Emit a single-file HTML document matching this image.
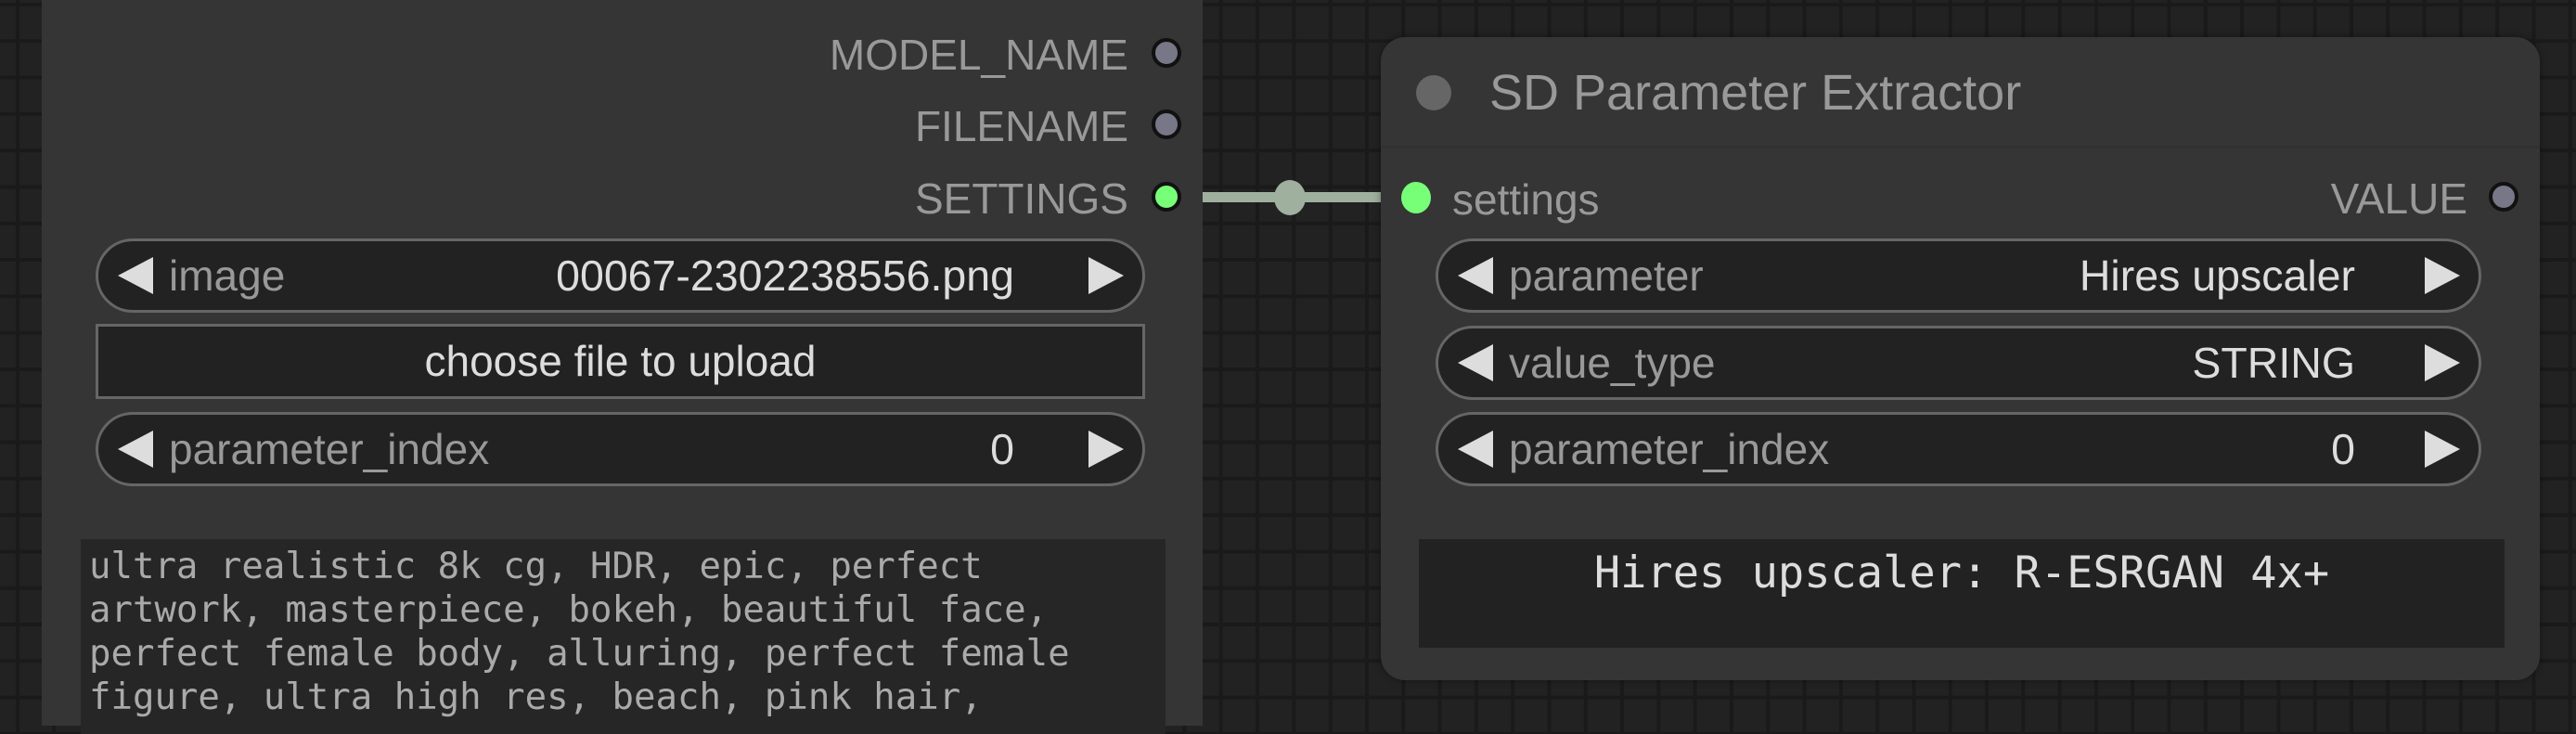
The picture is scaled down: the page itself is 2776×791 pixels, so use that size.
<!DOCTYPE html>
<html><head><style>
html,body{margin:0;padding:0}
body{width:2776px;height:782px;overflow:hidden;position:relative;background-color:#222;
background-image:linear-gradient(to right,#1a1a1a 0 4px,transparent 4px),linear-gradient(to bottom,#1a1a1a 0 4px,transparent 4px);
background-size:39.3px 39.3px;background-position:17px 3px;font-family:"Liberation Sans",sans-serif}
.abs{position:absolute}
.node{position:absolute;background:#353535}
.lbl{position:absolute;font-size:46px;color:#999;white-space:nowrap;line-height:50px}
.dot{position:absolute;width:32px;height:32px;border-radius:50%;border:4px solid #111;box-sizing:border-box}
.w{position:absolute;height:80px;border-radius:40px;background:#222;border:3px solid #666;box-sizing:border-box}
.w .l{position:absolute;border-style:solid;border-width:20px 38px 20px 0;border-color:transparent #ddd transparent transparent;top:17px}
.w .r{position:absolute;border-style:solid;border-width:20px 0 20px 38px;border-color:transparent transparent transparent #ddd;top:17px}
.w .t{position:absolute;top:12px;font-size:46px;line-height:50px;color:#999;white-space:nowrap}
.w .v{position:absolute;top:12px;font-size:46.5px;line-height:50px;color:#ddd;white-space:nowrap;text-align:right}
.mono{font-family:"DejaVu Sans Mono","Liberation Mono",monospace}
</style></head><body>
<div class="node" style="left:45px;top:0;width:1251px;height:782px"></div>
<div class="lbl" style="right:1560px;top:34px">MODEL_NAME</div>
<div class="dot" style="left:1241px;top:41px;background:#778"></div>
<div class="lbl" style="right:1560px;top:111px">FILENAME</div>
<div class="dot" style="left:1241px;top:118px;background:#778"></div>
<div class="lbl" style="right:1560px;top:189px">SETTINGS</div>
<div class="dot" style="left:1241px;top:196px;background:#7f7"></div>

<div class="w" style="left:103px;top:257px;width:1131px"><div class="l" style="left:21px"></div><div class="t" style="left:76px">image</div><div class="v" style="right:138px">00067-2302238556.png</div><div class="r" style="left:1067px"></div></div>
<div class="abs" style="left:103px;top:349px;width:1131px;height:81px;background:#222;border:3px solid #666;box-sizing:border-box;color:#ddd;font-size:46px;line-height:75px;text-align:center">choose file to upload</div>
<div class="w" style="left:103px;top:444px;width:1131px"><div class="l" style="left:21px"></div><div class="t" style="left:76px">parameter_index</div><div class="v" style="right:138px">0</div><div class="r" style="left:1067px"></div></div>

<div class="abs mono" style="left:87px;top:581px;width:1169px;height:210px;background:#262626;color:#aaa;font-size:39px;line-height:47px;padding:6px 0 0 9px;box-sizing:border-box;white-space:pre">ultra realistic 8k cg, HDR, epic, perfect
artwork, masterpiece, bokeh, beautiful face,
perfect female body, alluring, perfect female
figure, ultra high res, beach, pink hair,</div>

<div class="abs" style="left:1296px;top:207px;width:216px;height:11px;background:#9fb09f"></div>
<div class="abs" style="left:1373px;top:194px;width:34px;height:38px;border-radius:50%;background:#9fb09f"></div>

<div class="node" style="left:1488px;top:40px;width:1249px;height:693px;border-radius:26px;box-shadow:0 0 8px rgba(0,0,0,.4)"></div>
<div class="abs" style="left:1488px;top:157px;width:1249px;height:3px;background:#303030"></div>
<div class="abs" style="left:1526px;top:81px;width:38px;height:38px;border-radius:50%;background:#666"></div>
<div class="abs" style="left:1605px;top:68px;font-size:54px;line-height:64px;color:#999;white-space:nowrap">SD Parameter Extractor</div>
<div class="abs" style="left:1510px;top:196px;width:32px;height:34px;border-radius:50%;background:#7f7"></div>
<div class="lbl" style="left:1565px;top:190px">settings</div>
<div class="lbl" style="right:117px;top:189px">VALUE</div>
<div class="dot" style="left:2682px;top:196px;background:#778"></div>

<div class="w" style="left:1547px;top:257px;width:1127px"><div class="l" style="left:21px"></div><div class="t" style="left:76px">parameter</div><div class="v" style="right:133px">Hires upscaler</div><div class="r" style="left:1063px"></div></div>
<div class="w" style="left:1547px;top:351px;width:1127px"><div class="l" style="left:21px"></div><div class="t" style="left:76px">value_type</div><div class="v" style="right:133px">STRING</div><div class="r" style="left:1063px"></div></div>
<div class="w" style="left:1547px;top:444px;width:1127px"><div class="l" style="left:21px"></div><div class="t" style="left:76px">parameter_index</div><div class="v" style="right:133px">0</div><div class="r" style="left:1063px"></div></div>

<div class="abs mono" style="left:1529px;top:581px;width:1170px;height:117px;background:#222;color:#ddd;font-size:47px;line-height:74px;text-align:center;white-space:pre">Hires upscaler: R-ESRGAN 4x+</div>
</body></html>
